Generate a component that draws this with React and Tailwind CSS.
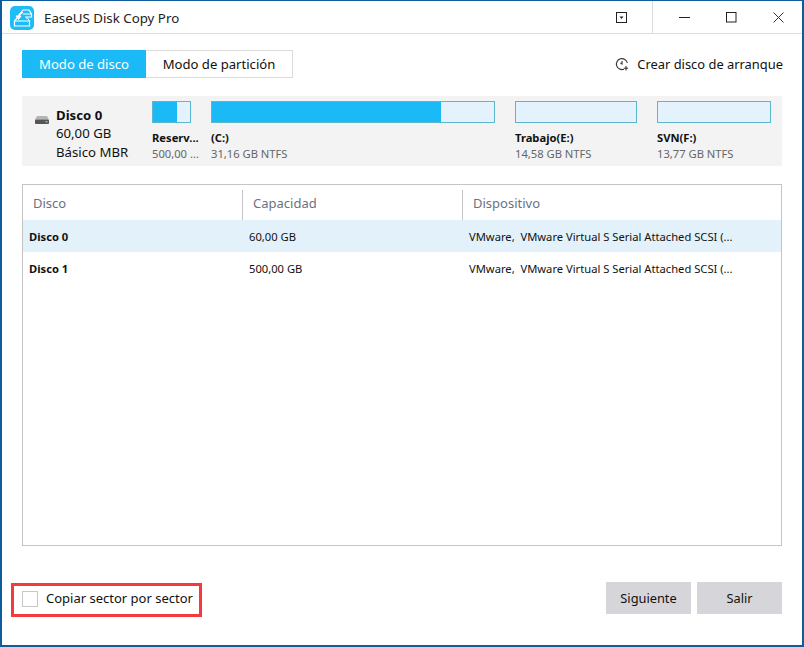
import React from "react";

function Part({ w, fill, name, info }) {
  return (
    <div className="shrink-0" style={{ width: w }}>
      <div className="h-[22px] border border-[#5bb8cf] bg-[#e3f2fd]">
        {fill ? <div className="h-full bg-[#1bbaf7]" style={{ width: fill }} /> : null}
      </div>
      <div className="mt-[7px] whitespace-nowrap text-[11.2px] leading-[16px] font-bold text-[#111]">{name}</div>
      <div className="whitespace-nowrap text-[11.2px] leading-[15.5px] text-[#666]">{info}</div>
    </div>
  );
}

function Row({ a, b, c, active }) {
  return (
    <div className={"flex h-[32px] items-center pt-[3px] text-[11.2px] text-[#111] " + (active ? "bg-[#e3f1fb]" : "bg-white")}>
      <div className="w-[220px] pl-[6px] font-bold">{a}</div>
      <div className="w-[220px] pl-[6px]">{b}</div>
      <div className="pl-[6px] whitespace-pre">{c}</div>
    </div>
  );
}

function Logo() {
  return (
    <svg width="24" height="24" viewBox="0 0 24 24" className="mt-[2px] shrink-0">
      <rect width="24" height="24" rx="5" fill="#1fbdf8" />
      <path d="M10 8 L13 4 H19 L21.5 8 V11 H15" fill="none" stroke="#fff" strokeWidth="1.2" />
      <path d="M13 8 H21" stroke="#fff" strokeWidth="1" />
      <path d="M4.5 15 L7 12 M4.5 15 H19.5 V20 H4.5 Z" fill="none" stroke="#fff" strokeWidth="1.2" />
      <path d="M16 12 H17.5 L19.5 15" fill="none" stroke="#fff" strokeWidth="1" />
      <path d="M13 6.5 C9.5 6.5 8.5 8.5 8.5 11 M6 10 L8.5 13.5 L11 10 Z" fill="#fff" stroke="#fff" strokeWidth="1" />
    </svg>
  );
}

export default function App() {
  return (
    <div className="flex h-[647px] w-[804px] flex-col overflow-hidden border-t-[1px] border-r-[2px] border-b-[2px] border-l-[2px] border-[#0f5c9c] bg-white font-['Noto_Sans',sans-serif] text-[#111]">
      <div className="flex h-[33px] shrink-0 items-center border-b border-[#dcdcdc] pl-[8px]">
        <Logo />
        <span className="ml-[10px] mt-[3px] text-[13.3px] text-[#222]">EaseUS Disk Copy Pro</span>
        <div className="ml-auto flex h-full items-center pr-[18px]">
          <svg width="11" height="11" viewBox="0 0 11 11" className="mr-[25px]">
            <rect x="0.5" y="0.5" width="10" height="10" fill="none" stroke="#222" />
            <path d="M3.5 4.5 H7.5 L5.5 7 Z" fill="#222" />
          </svg>
          <div className="h-full w-px bg-[#dcdcdc]" />
          <div className="ml-[26px] flex items-center gap-[36px]">
            <svg width="11" height="11" viewBox="0 0 11 11"><path d="M0 5.5 H11" stroke="#222" /></svg>
            <svg width="11" height="11" viewBox="0 0 11 11"><rect x="0.5" y="0.5" width="9.5" height="9.5" fill="none" stroke="#222" /></svg>
            <svg width="11" height="11" viewBox="0 0 11 11"><path d="M0.5 0.5 L10.5 10.5 M10.5 0.5 L0.5 10.5" stroke="#333" /></svg>
          </div>
        </div>
      </div>

      <div className="flex min-h-0 flex-1 flex-col px-[20px]">
        <div className="mt-[16px] flex h-[28px] shrink-0 items-center">
          <div className="flex h-full w-[124px] items-center justify-center bg-[#1bbaf7] pt-[1px] text-[13.1px] text-white">Modo de disco</div>
          <div className="flex h-full w-[147px] items-center justify-center border border-l-0 border-[#dcdcdc] pt-[1px] text-[13.1px]">Modo de partición</div>
          <div className="ml-auto mr-[-1px] flex items-center gap-[8px] pt-[1px] text-[12.9px]">
            <svg width="14" height="14" viewBox="0 0 14 14" fill="none" stroke="#333" strokeWidth="1.1">
              <path d="M9 12.2 A5.5 5.5 0 1 1 12.3 6" />
              <path d="M7 4 V7 L5.5 6" />
              <path d="M11 9 V13.5 M8.8 11.2 H13.2" />
            </svg>
            <span>Crear disco de arranque</span>
          </div>
        </div>

        <div className="mt-[18px] flex h-[70px] shrink-0 bg-[#f3f3f3] pt-[5px]">
          <div className="flex w-[130px] shrink-0 pl-[13px]">
            <svg width="14" height="8" viewBox="0 0 14 8" className="mt-[15px] shrink-0">
              <path d="M2 0 H12 L14 3.5 H0 Z" fill="#b5b5b5" />
              <rect y="3.5" width="14" height="4.5" rx="1" fill="#555" />
              <rect x="10.5" y="5" width="2" height="1.5" fill="#5fdc5f" />
            </svg>
            <div className="ml-[7px] mt-[4.5px] whitespace-nowrap text-[13.2px] leading-[18.5px]">
              <div className="font-bold">Disco 0</div>
              <div>60,00 GB</div>
              <div>Básico MBR</div>
            </div>
          </div>
          <div className="flex gap-[20px]">
            <Part w={39} fill={24} name="Reserv..." info="500,00 ..." />
            <Part w={284} fill={229} name="(C:)" info="31,16 GB NTFS" />
            <Part w={122} name="Trabajo(E:)" info="14,58 GB NTFS" />
            <Part w={114} name="SVN(F:)" info="13,77 GB NTFS" />
          </div>
        </div>

        <div className="mt-[18px] h-[362px] shrink-0 border border-[#c4c4c4]">
          <div className="flex h-[35px] items-center text-[13px] text-[#6b7280]">
            <div className="flex h-[30px] w-[220px] items-center self-end border-r border-[#c4c4c4] pb-[2px] pl-[10px]">Disco</div>
            <div className="flex h-[30px] w-[220px] items-center self-end border-r border-[#c4c4c4] pb-[2px] pl-[10px]">Capacidad</div>
            <div className="flex h-[30px] items-center self-end pb-[2px] pl-[10px]">Dispositivo</div>
          </div>
          <Row active a="Disco 0" b="60,00 GB" c="VMware,  VMware Virtual S Serial Attached SCSI (..." />
          <Row a="Disco 1" b="500,00 GB" c="VMware,  VMware Virtual S Serial Attached SCSI (..." />
        </div>

        <div className="mt-[36px] flex shrink-0 items-start">
          <div className="ml-[-11px] mt-[1px] flex h-[34px] w-[191px] items-center border-[3px] border-[#f53a3d] pb-[2px] pl-[8px]">
            <div className="h-[16px] w-[16px] border border-[#c8c8c8]" />
            <span className="ml-[8px] text-[13px]">Copiar sector por sector</span>
          </div>
          <div className="ml-auto flex gap-[6px]">
            <div className="flex h-[32px] w-[85px] items-center justify-center bg-[#d5d5da] pt-[1px] text-[12.8px]">Siguiente</div>
            <div className="flex h-[32px] w-[85px] items-center justify-center bg-[#d5d5da] pt-[1px] text-[12.8px]">Salir</div>
          </div>
        </div>
      </div>
    </div>
  );
}
